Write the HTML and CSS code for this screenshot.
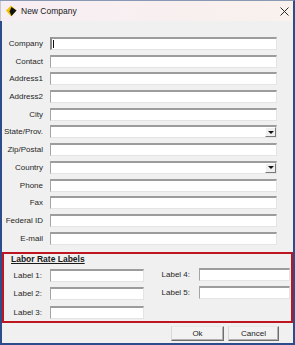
FILE: index.html
```html
<!DOCTYPE html>
<html lang="en">
<head>
  <meta charset="UTF-8">
  <title>New Company</title>
  <link rel="stylesheet" href="styles.css">
</head>
<body>
<div class="window">
  <div class="titlebar">
    <svg class="app-icon" width="11" height="12" viewBox="0 0 11 12">
      <polygon points="5,0.5 10.5,5.5 5,11.5 0,5.5" fill="#f2c200"/>
      <polygon points="5.5,2 10.5,5.5 5.5,11 3.5,6.5" fill="#111"/>
    </svg>
    <span class="title">New Company</span>
    <svg class="close" width="9" height="9" viewBox="0 0 9 9">
      <path d="M0.5 0.5L8.5 8.5M8.5 0.5L0.5 8.5" stroke="#2a2a2a" stroke-width="1"/>
    </svg>
  </div>

  <div class="content">
    <div class="form">
      <label for="company">Company</label>
      <span class="field focus"><input id="company" type="text"></span>
      <label for="contact">Contact</label>
      <input id="contact" type="text">
      <label for="addr1">Address1</label>
      <input id="addr1" type="text">
      <label for="addr2">Address2</label>
      <input id="addr2" type="text">
      <label for="city">City</label>
      <input id="city" type="text">
      <label>State/Prov.</label>
      <div class="select"><span class="select-value"></span><span class="drop"></span></div>
      <label for="zip">Zip/Postal</label>
      <input id="zip" type="text">
      <label>Country</label>
      <div class="select"><span class="select-value"></span><span class="drop"></span></div>
      <label for="phone">Phone</label>
      <input id="phone" type="text">
      <label for="fax">Fax</label>
      <input id="fax" type="text">
      <label for="fedid">Federal ID</label>
      <input id="fedid" type="text">
      <label for="email">E-mail</label>
      <input id="email" type="text">
    </div>

    <div class="rates">
      <div class="rates-title">Labor Rate Labels</div>
      <div class="rate-cols">
        <div class="rate-col left">
          <label for="l1">Label 1:</label><input id="l1" type="text">
          <label for="l2">Label 2:</label><input id="l2" type="text">
          <label for="l3">Label 3:</label><input id="l3" type="text">
        </div>
        <div class="rate-col right">
          <label for="l4">Label 4:</label><input id="l4" type="text">
          <label for="l5">Label 5:</label><input id="l5" type="text">
        </div>
      </div>
    </div>

    <div class="actions">
      <button class="btn ok">Ok</button>
      <button class="btn cancel">Cancel</button>
    </div>
  </div>
</div>
</body>
</html>
```

FILE: styles.css
```css
html, body {
  margin: 0;
  padding: 0;
  background: #ffffff;
}
body {
  font-family: "Liberation Sans", Arial, sans-serif;
  color: #222;
}
.window {
  width: 295px;
  height: 345px;
  box-sizing: border-box;
  display: flex;
  flex-direction: column;
  border-top: 1px solid #8a98b4;
  border-right: 2px solid #2c4c8c;
}
.titlebar {
  height: 20px;
  display: flex;
  align-items: center;
  padding-left: 5px;
  background: linear-gradient(to right, #f7eef4, #f8f1ec);
  border-left: 1px solid #c8c8d0;
}
.app-icon {
  margin-right: 4px;
}
.title {
  font-family: "Liberation Sans", Arial, sans-serif;
  font-size: 8.5px;
  color: #1a1a1a;
  flex: 1;
}
.close {
  margin-right: 4px;
}
.content {
  flex: 1;
  background: #f0f0f0;
  border-left: 2px solid #2c4c8c;
  border-bottom: 2px solid #2c4c8c;
  display: flex;
  flex-direction: column;
}
.form {
  display: grid;
  grid-template-columns: 41px 227px;
  column-gap: 7px;
  row-gap: 4.7px;
  grid-auto-rows: 13px;
  padding-top: 16px;
}
label {
  font-size: 8px;
  line-height: 13px;
  text-align: right;
  white-space: nowrap;
  color: #262626;
}
input, .select {
  display: block;
  width: 100%;
  height: 13px;
  margin: 0;
  padding: 0;
  box-sizing: border-box;
  background: #fff;
  border: 1px solid;
  border-top-width: 2px;
  border-color: #9c9c9c #e4e4e4 #e4e4e4 #a4a4a4;
  outline: none;
}
.field {
  display: block;
  position: relative;
}
.field.focus input {
  border-left: 2px solid #888;
}
.field.focus::after {
  content: "";
  position: absolute;
  left: 3px;
  top: 3px;
  width: 1px;
  height: 8px;
  background: #111;
}
.select {
  display: flex;
  align-items: stretch;
}
.select-value {
  flex: 1;
}
.drop {
  width: 11px;
  box-sizing: border-box;
  background: #f0f0f0;
  border: 1px solid;
  border-color: #ffffff #7a7a7a #7a7a7a #ffffff;
  display: flex;
  align-items: center;
  justify-content: center;
}
.drop::before {
  content: "";
  border-left: 3px solid transparent;
  border-right: 3px solid transparent;
  border-top: 3px solid #111;
}
.rates {
  margin-top: 7px;
  height: 71px;
  box-sizing: border-box;
  border: 2px solid #be1620;
}
.rates-title {
  font-size: 8.5px;
  font-weight: bold;
  line-height: 11px;
  padding-left: 7px;
  text-decoration: underline;
  color: #1a1a1a;
}
.rate-cols {
  display: flex;
  margin-top: 4px;
}
.rate-col {
  display: grid;
  grid-auto-rows: 13px;
  row-gap: 5.5px;
  align-content: start;
}
.rate-col.left {
  grid-template-columns: 38px 94px;
  column-gap: 8px;
}
.rate-col.right {
  grid-template-columns: 46px 91px;
  column-gap: 9px;
  margin-top: -1px;
}
.actions {
  display: flex;
  justify-content: flex-end;
  gap: 4px;
  padding: 3px 14px 0 0;
}
.btn {
  height: 15px;
  padding: 0;
  font-family: "Liberation Sans", Arial, sans-serif;
  font-size: 8px;
  color: #222;
  background: #f2f2f2;
  border: 1px solid;
  border-color: #e8e8e8 #6e6e6e #6e6e6e #d8d8d8;
  box-shadow: inset -1px -1px #b0b0b0;
}
.btn.ok {
  width: 53px;
}
.btn.cancel {
  width: 51px;
}
```
